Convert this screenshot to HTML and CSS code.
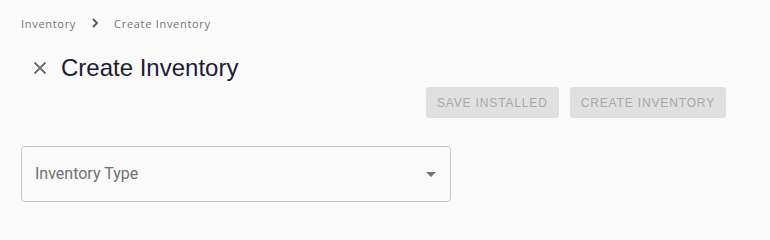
FILE: index.html
```html
<!DOCTYPE html>
<html>
<head>
<meta charset="utf-8">
<link rel="stylesheet" href="styles.css">
</head>
<body>
<div class="page">
  <nav class="crumbs">
    <span class="crumb">Inventory</span>
    <svg class="chev" width="8" height="10" viewBox="0 0 8 10"><path d="M2 1 L6 5 L2 9" fill="none" stroke="#555" stroke-width="1.8"/></svg>
    <span class="crumb">Create Inventory</span>
  </nav>
  <div class="title-row">
    <svg class="close" width="14" height="14" viewBox="0 0 14 14"><path d="M1.5 1.5 L12.5 12.5 M12.5 1.5 L1.5 12.5" stroke="#6b6b6b" stroke-width="1.8" fill="none"/></svg>
    <h1 class="title">Create Inventory</h1>
  </div>
  <div class="actions">
    <button class="btn">SAVE INSTALLED</button>
    <button class="btn">CREATE INVENTORY</button>
  </div>
  <div class="select">
    <span class="label">Inventory Type</span>
    <svg class="arrow" width="10" height="5" viewBox="0 0 10 5"><path d="M0 0 L10 0 L5 5 Z" fill="#757575"/></svg>
  </div>
</div>
</body>
</html>
```

FILE: styles.css
```css
html, body {
  margin: 0;
  padding: 0;
  background: #fafafa;
}
.page {
  width: 770px;
  height: 240px;
  box-sizing: border-box;
  padding: 14px 44px 0 21px;
  font-family: Roboto, "Liberation Sans", sans-serif;
}
.crumbs {
  display: flex;
  align-items: center;
  gap: 15px;
  height: 18px;
  font-family: "Open Sans", sans-serif;
  font-size: 11px;
  letter-spacing: 0.7px;
  color: #757575;
}
.title-row {
  display: flex;
  align-items: center;
  gap: 14px;
  margin-top: 22px;
  padding-left: 12px;
  height: 28px;
}
.close {
  flex: none;
}
.title {
  margin: 0;
  font-family: "Liberation Sans", Arial, sans-serif;
  font-weight: 400;
  font-size: 24px;
  color: #1c1c33;
}
.actions {
  display: flex;
  justify-content: flex-end;
  gap: 11px;
  margin-top: 5px;
}
.btn {
  height: 31px;
  padding: 0 11px;
  border: none;
  border-radius: 3px;
  background: #e0e0e0;
  color: #a8a8a8;
  font-family: "Liberation Sans", Arial, sans-serif;
  font-size: 12px;
  letter-spacing: 0.85px;
}
.select {
  margin-top: 28px;
  width: 430px;
  height: 56px;
  box-sizing: border-box;
  border: 1px solid #c6c6c6;
  border-radius: 4px;
  display: flex;
  align-items: center;
  justify-content: space-between;
  padding: 0 14px 0 13px;
}
.label {
  font-size: 16px;
  color: #707070;
  margin-top: -1px;
}
```
